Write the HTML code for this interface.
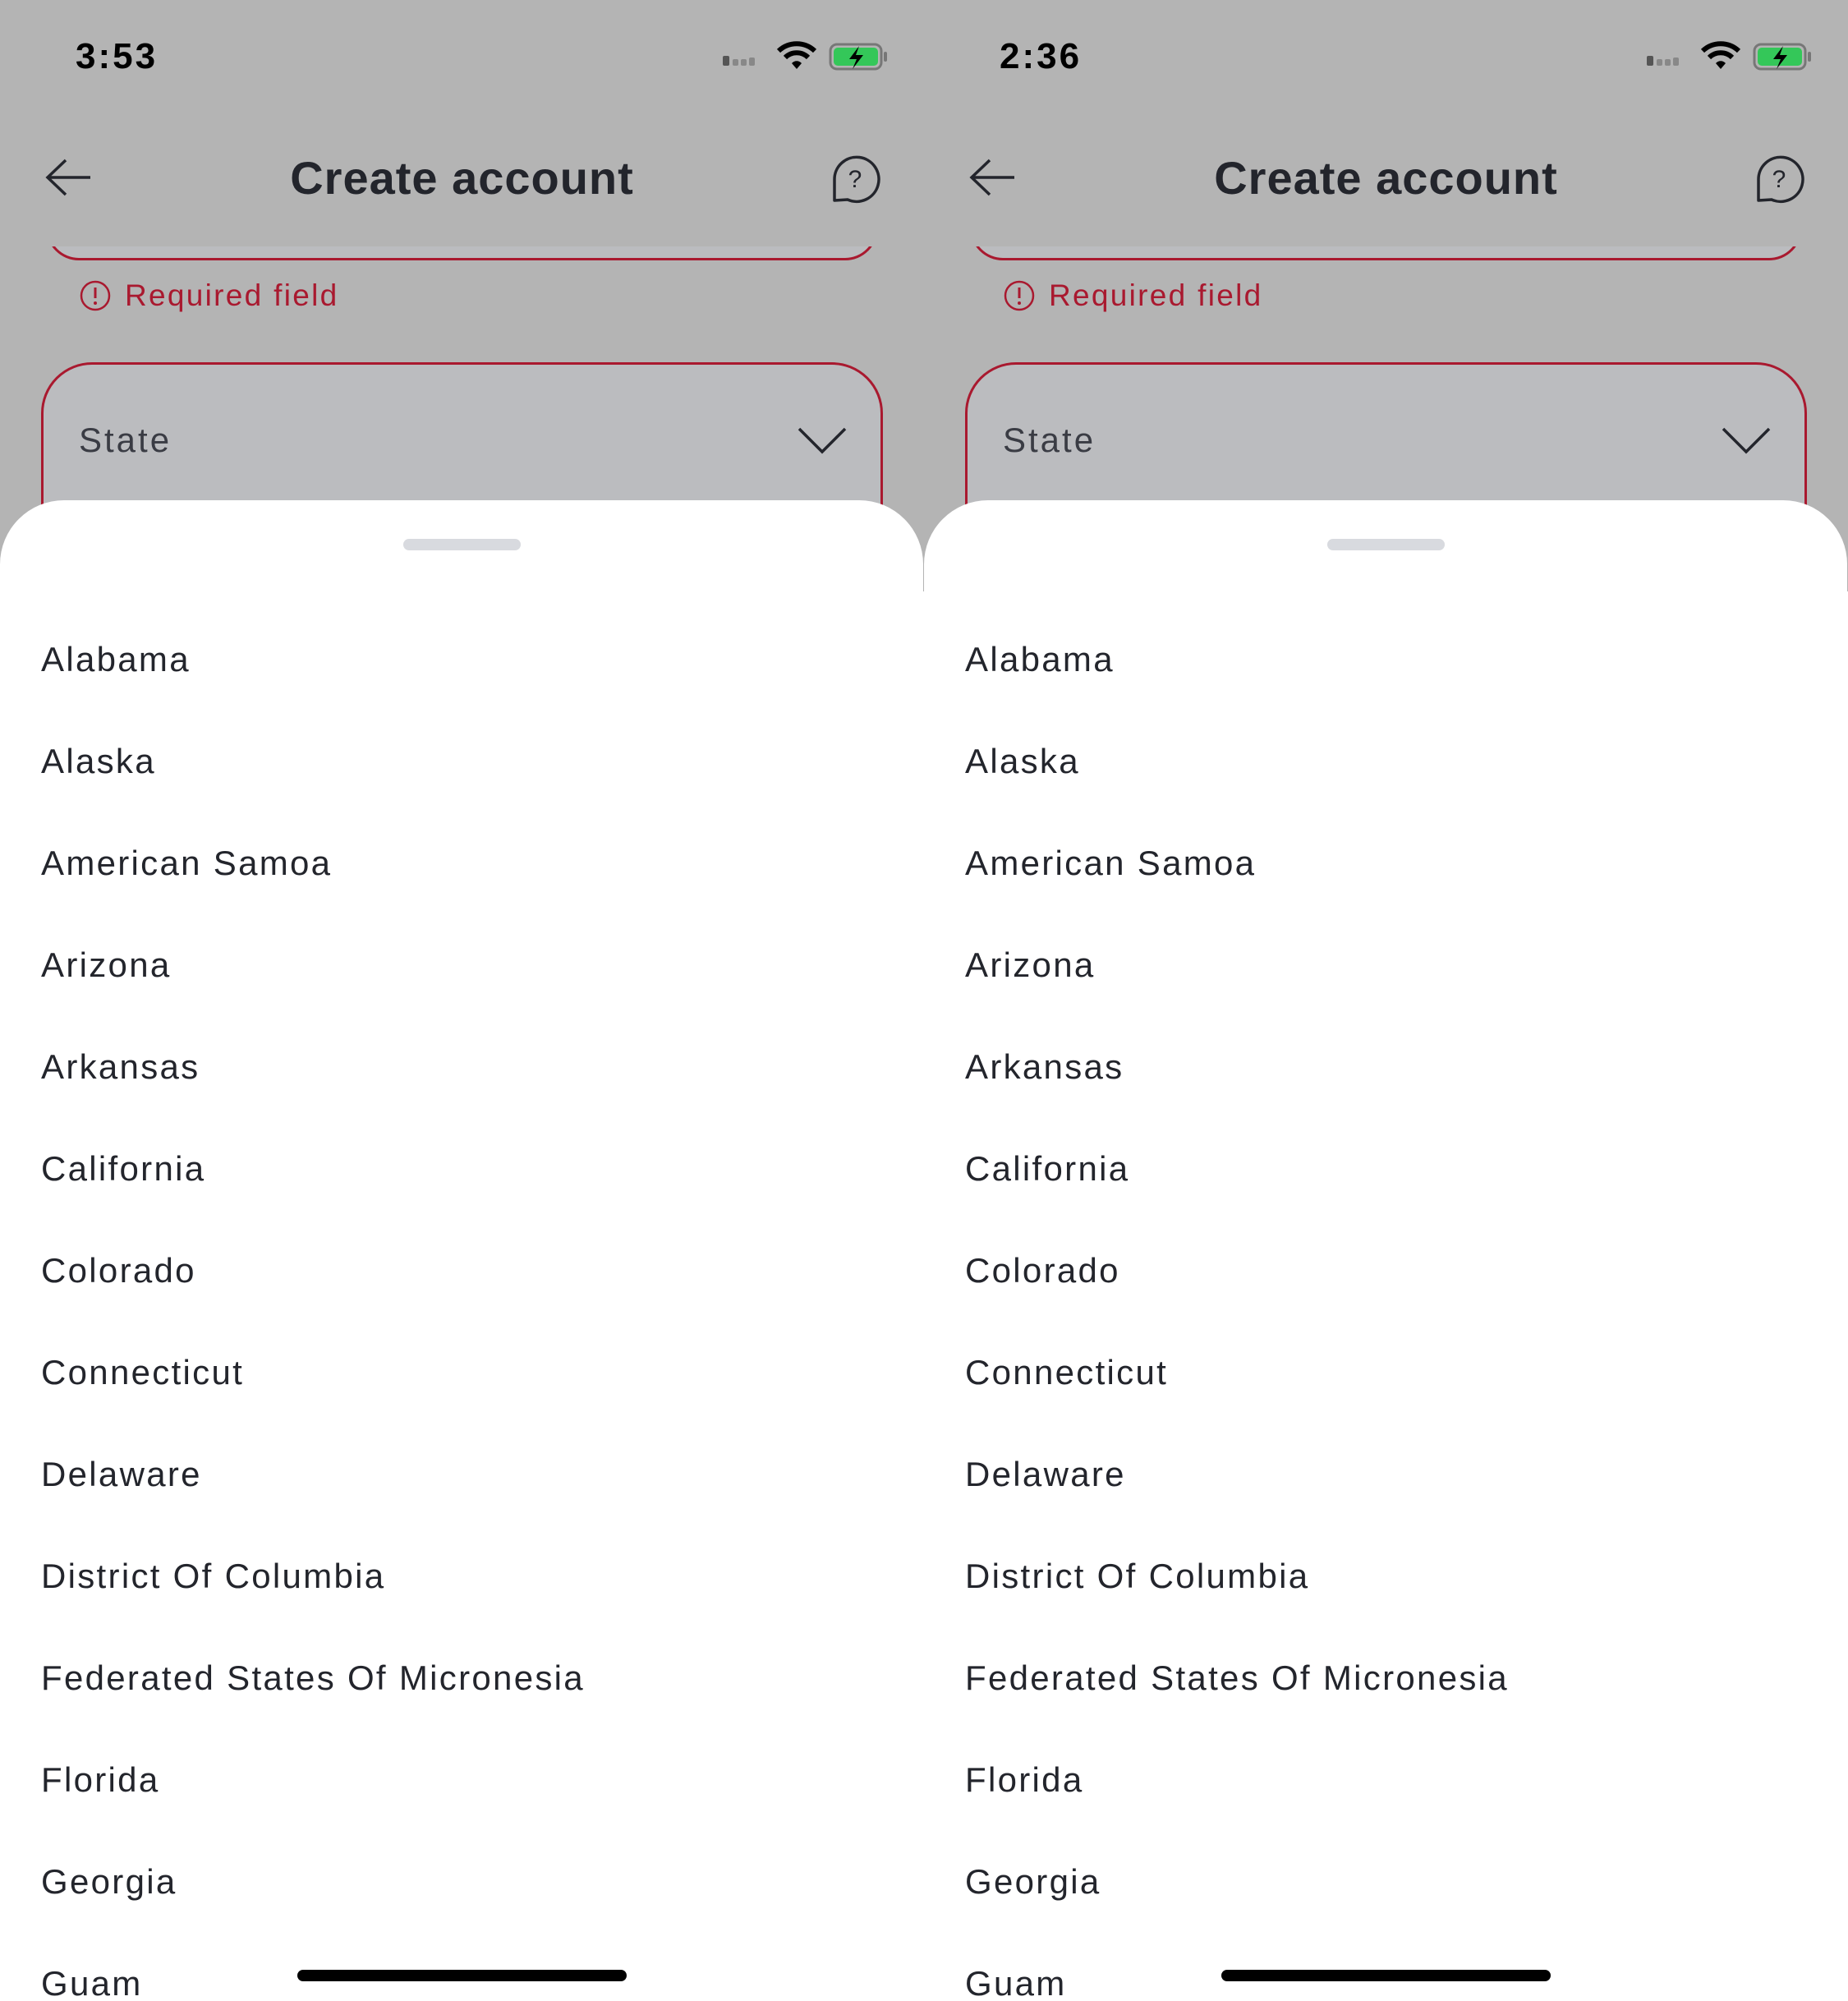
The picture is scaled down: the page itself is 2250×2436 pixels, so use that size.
<!DOCTYPE html>
<html><head><style>
*{margin:0;padding:0;box-sizing:border-box}
body{width:2250px;height:2436px;background:#fff;position:relative;overflow:hidden;font-family:"Liberation Sans",sans-serif}
.p{position:absolute;top:0;width:1125px;height:2436px;overflow:hidden}
.top{position:absolute;left:0;top:0;width:1125px;height:720px;background:#b4b4b4}
.time{position:absolute;left:92px;top:44px;font-size:44px;font-weight:bold;color:#000;letter-spacing:3px}
.title{position:absolute;left:0;width:1125px;top:184px;text-align:center;font-size:56px;color:#23252c;font-weight:bold;letter-spacing:1px}
.f1{position:absolute;left:56px;top:200px;width:1013px;height:117px;border:3px solid #a9192f;border-radius:0 0 40px 40px;border-top:none;background:#bbbcbf}
.hdr{position:absolute;left:0;top:0;width:1125px;height:300px;background:#b4b4b4}
.req{position:absolute;left:152px;top:339px;font-size:37px;color:#a9192f;letter-spacing:2.3px}
.f2{position:absolute;left:50px;top:441px;width:1025px;height:260px;border:3px solid #a9192f;border-radius:62px;background:#bbbcbf}
.state{position:absolute;left:96px;top:512px;font-size:42px;color:#3a3c44;letter-spacing:3px}
.sheet{position:absolute;left:0;top:609px;width:1124px;height:1900px;background:#fff;border-radius:78px 78px 0 0}
.handle{position:absolute;left:491px;top:656px;width:143px;height:14px;border-radius:7px;background:#d8dadf}
.it{position:absolute;left:50px;font-size:42px;color:#23252c;letter-spacing:2.3px}
.home{position:absolute;left:362px;top:2398px;width:401px;height:14px;border-radius:7px;background:#000}
</style></head><body>
<div class="p" style="left:0">
<div class="top"></div>
<div class="f1"></div><div class="hdr"></div>
<div class="time">3:53</div>
<svg style="position:absolute;left:880px;top:50px" width="210" height="40" viewBox="0 0 210 40">
<rect x="0" y="18" width="8" height="12" rx="2" fill="#555"/><rect x="12" y="22" width="7" height="8" rx="2" fill="#888"/><rect x="22" y="22" width="7" height="8" rx="2" fill="#888"/><rect x="32" y="20" width="7" height="10" rx="2" fill="#888"/>
<path d="M68 12a32 32 0 0 1 44 0" stroke="#000" stroke-width="6" fill="none"/><path d="M76 20a20 20 0 0 1 28 0" stroke="#000" stroke-width="6" fill="none"/><path d="M84 27l6 7 6-7a8 8 0 0 0-12 0z" fill="#000"/>
<rect x="131" y="4" width="62" height="30" rx="8" fill="none" stroke="#777" stroke-width="3"/><rect x="135" y="8" width="54" height="22" rx="5" fill="#34c759"/><rect x="196" y="13" width="4" height="12" rx="2" fill="#777"/><path d="M166 6l-12 16h9l-5 12 13-17h-9z" fill="#000"/>
</svg>
<svg style="position:absolute;left:54px;top:192px" width="60" height="50"><path d="M56 24H4M26 3L4 24l22 21" stroke="#23252c" stroke-width="3.5" fill="none"/></svg>
<div class="title">Create account</div>
<svg style="position:absolute;left:1010px;top:186px" width="62" height="64" viewBox="0 0 62 64"><path d="M6 58V33a27 27 0 1 1 16 24z" stroke="#23252c" stroke-width="3.5" fill="none" stroke-linejoin="round"/><text x="31" y="42" text-anchor="middle" font-size="30" font-family="Liberation Sans" fill="#23252c">?</text></svg>
<svg style="position:absolute;left:96px;top:340px" width="40" height="40"><circle cx="20" cy="20" r="17" stroke="#a9192f" stroke-width="2.5" fill="none"/><path d="M20 10v13" stroke="#a9192f" stroke-width="3"/><circle cx="20" cy="29" r="2" fill="#a9192f"/></svg>
<div class="req">Required field</div>
<div class="f2"></div>
<div class="state">State</div>
<svg style="position:absolute;left:970px;top:518px" width="62" height="38"><path d="M3 4l28 28 28-28" stroke="#23252c" stroke-width="3.5" fill="none"/></svg>
<div class="sheet"></div>
<div class="handle"></div>
<div class="it" style="top:779px">Alabama</div>
<div class="it" style="top:903px">Alaska</div>
<div class="it" style="top:1027px">American Samoa</div>
<div class="it" style="top:1151px">Arizona</div>
<div class="it" style="top:1275px">Arkansas</div>
<div class="it" style="top:1399px">California</div>
<div class="it" style="top:1523px">Colorado</div>
<div class="it" style="top:1647px">Connecticut</div>
<div class="it" style="top:1771px">Delaware</div>
<div class="it" style="top:1895px">District Of Columbia</div>
<div class="it" style="top:2019px">Federated States Of Micronesia</div>
<div class="it" style="top:2143px">Florida</div>
<div class="it" style="top:2267px">Georgia</div>
<div class="it" style="top:2391px">Guam</div>
<div class="home"></div>
</div>
<div class="p" style="left:1125px">
<div class="top"></div>
<div class="f1"></div><div class="hdr"></div>
<div class="time">2:36</div>
<svg style="position:absolute;left:880px;top:50px" width="210" height="40" viewBox="0 0 210 40">
<rect x="0" y="18" width="8" height="12" rx="2" fill="#555"/><rect x="12" y="22" width="7" height="8" rx="2" fill="#888"/><rect x="22" y="22" width="7" height="8" rx="2" fill="#888"/><rect x="32" y="20" width="7" height="10" rx="2" fill="#888"/>
<path d="M68 12a32 32 0 0 1 44 0" stroke="#000" stroke-width="6" fill="none"/><path d="M76 20a20 20 0 0 1 28 0" stroke="#000" stroke-width="6" fill="none"/><path d="M84 27l6 7 6-7a8 8 0 0 0-12 0z" fill="#000"/>
<rect x="131" y="4" width="62" height="30" rx="8" fill="none" stroke="#777" stroke-width="3"/><rect x="135" y="8" width="54" height="22" rx="5" fill="#34c759"/><rect x="196" y="13" width="4" height="12" rx="2" fill="#777"/><path d="M166 6l-12 16h9l-5 12 13-17h-9z" fill="#000"/>
</svg>
<svg style="position:absolute;left:54px;top:192px" width="60" height="50"><path d="M56 24H4M26 3L4 24l22 21" stroke="#23252c" stroke-width="3.5" fill="none"/></svg>
<div class="title">Create account</div>
<svg style="position:absolute;left:1010px;top:186px" width="62" height="64" viewBox="0 0 62 64"><path d="M6 58V33a27 27 0 1 1 16 24z" stroke="#23252c" stroke-width="3.5" fill="none" stroke-linejoin="round"/><text x="31" y="42" text-anchor="middle" font-size="30" font-family="Liberation Sans" fill="#23252c">?</text></svg>
<svg style="position:absolute;left:96px;top:340px" width="40" height="40"><circle cx="20" cy="20" r="17" stroke="#a9192f" stroke-width="2.5" fill="none"/><path d="M20 10v13" stroke="#a9192f" stroke-width="3"/><circle cx="20" cy="29" r="2" fill="#a9192f"/></svg>
<div class="req">Required field</div>
<div class="f2"></div>
<div class="state">State</div>
<svg style="position:absolute;left:970px;top:518px" width="62" height="38"><path d="M3 4l28 28 28-28" stroke="#23252c" stroke-width="3.5" fill="none"/></svg>
<div class="sheet"></div>
<div class="handle"></div>
<div class="it" style="top:779px">Alabama</div>
<div class="it" style="top:903px">Alaska</div>
<div class="it" style="top:1027px">American Samoa</div>
<div class="it" style="top:1151px">Arizona</div>
<div class="it" style="top:1275px">Arkansas</div>
<div class="it" style="top:1399px">California</div>
<div class="it" style="top:1523px">Colorado</div>
<div class="it" style="top:1647px">Connecticut</div>
<div class="it" style="top:1771px">Delaware</div>
<div class="it" style="top:1895px">District Of Columbia</div>
<div class="it" style="top:2019px">Federated States Of Micronesia</div>
<div class="it" style="top:2143px">Florida</div>
<div class="it" style="top:2267px">Georgia</div>
<div class="it" style="top:2391px">Guam</div>
<div class="home"></div>
</div>
</body></html>
